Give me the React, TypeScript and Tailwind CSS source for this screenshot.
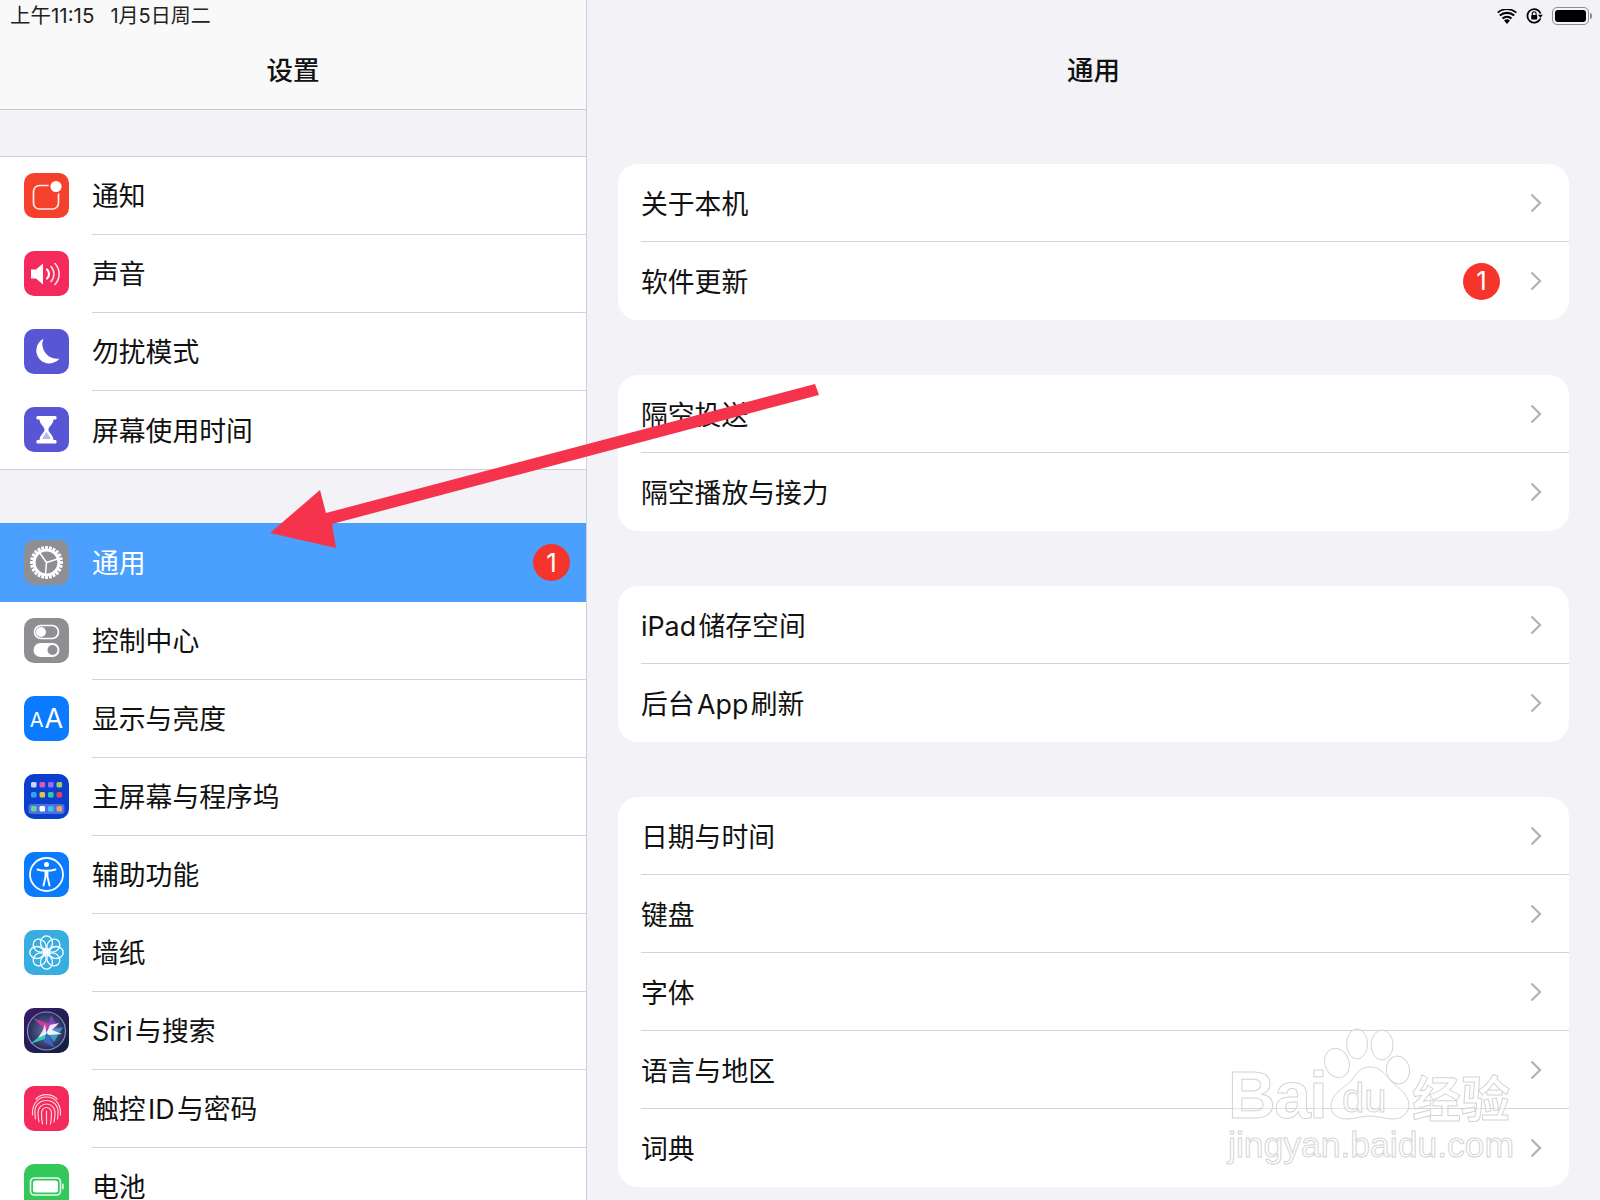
import React from "react";

const W = "w-[45px] h-[45px] rounded-[10px] shrink-0 overflow-hidden flex items-center justify-center -mt-[1px]";

function Svg({ children }: { children: React.ReactNode }) {
  return (
    <svg viewBox="0 0 45 45" className="w-[45px] h-[45px] block">
      {children}
    </svg>
  );
}

const range = (n: number) => Array.from({ length: n }, (_, i) => i);

const icons: Record<string, React.ReactNode> = {
  notify: (
    <div className={`${W} bg-[#f5402c]`}>
      <Svg>
        <rect x="9.5" y="12.5" width="25" height="23.5" rx="6" fill="none" stroke="#fff" strokeOpacity="0.9" strokeWidth="1.7" />
        <circle cx="32" cy="13.5" r="7.4" fill="#f5402c" />
        <circle cx="32" cy="13.5" r="5.6" fill="#fff" />
      </Svg>
    </div>
  ),
  sound: (
    <div className={`${W} bg-[#f52a5c]`}>
      <Svg>
        <path d="M7 18.5h5l7-6v21l-7-6H7z" fill="#fff" />
        <path d="M23 18.5a6 6 0 0 1 0 9" fill="none" stroke="#fff" strokeWidth="2.2" strokeLinecap="round" />
        <path d="M27 15.5a11 11 0 0 1 0 15" fill="none" stroke="#fff" strokeOpacity="0.85" strokeWidth="1.6" strokeLinecap="round" />
        <path d="M31 12.5a15.5 15.5 0 0 1 0 21" fill="none" stroke="#fff" strokeOpacity="0.85" strokeWidth="1.6" strokeLinecap="round" />
      </Svg>
    </div>
  ),
  moon: (
    <div className={`${W} bg-[#5956d6]`}>
      <Svg>
        <path d="M19.500 9.800A13 13 0 1 0 35.500 29.500 14.500 14.500 0 0 1 19.500 9.800z" fill="#fff" />
      </Svg>
    </div>
  ),
  hourglass: (
    <div className={`${W} bg-[#5956d6]`}>
      <Svg>
        <rect x="12.500" y="9" width="20" height="3.400" rx="1.200" fill="#fff" />
        <rect x="12.500" y="33" width="20" height="3.400" rx="1.200" fill="#fff" />
        <path d="M15.500 12h14c0 5.500-5 7.500-5 10.700s5 5.200 5 10.500h-14c0-5.300 5-7.300 5-10.500S15.500 17.500 15.500 12z" fill="#fff" />
        <path d="M22.500 24.500c-.6 2.500-3.300 4-4.200 7.500h8.400c-.9-3.500-3.600-5-4.200-7.500z" fill="#b9b7ee" />
      </Svg>
    </div>
  ),
  gear: (
    <div className={`${W} bg-[#8e8e93]`}>
      <Svg>
        {range(24).map((i) => (
          <rect key={i} x="21.100" y="6" width="2.800" height="5" fill="#fff" transform={`rotate(${i * 15} 22.500 22.500)`} />
        ))}
        <circle cx="22.500" cy="22.500" r="12.300" fill="none" stroke="#fff" strokeWidth="2.800" />
        <path d="M22.500 22.500L15.500 12.500M22.500 22.500L33.500 19M22.500 22.500L21.500 34" stroke="#fff" strokeWidth="1.500" />
      </Svg>
    </div>
  ),
  control: (
    <div className={`${W} bg-[#8e8e93]`}>
      <Svg>
        <rect x="10.500" y="7.500" width="24" height="13" rx="6.500" fill="none" stroke="#fff" strokeWidth="1.700" />
        <circle cx="17" cy="14" r="5" fill="#fff" />
        <rect x="9.500" y="25" width="26" height="14" rx="7" fill="#fff" />
        <circle cx="28.500" cy="32" r="5" fill="#8e8e93" />
      </Svg>
    </div>
  ),
  display: (
    <div className={`${W} bg-[#0a7aff] text-white font-['Inter','Noto_Sans_CJK_SC',sans-serif] font-normal`}>
      <span className="text-[20px] leading-none pt-[3px]">A</span>
      <span className="text-[27px] leading-none ml-[1px]">A</span>
    </div>
  ),
  home: (
    <div className={`${W} bg-[#0d3fce]`}>
      <Svg>
        {[
          ["#c9d4ff", 7],
          ["#dd5ab0", 15.500],
          ["#9a6cf5", 24],
          ["#9ccf63", 32.500],
        ].map(([c, x]) => (
          <rect key={String(x)} x={Number(x)} y="8" width="5.600" height="5.600" rx="1.500" fill={String(c)} />
        ))}
        {[
          ["#2aa7ef", 7],
          ["#e4c13d", 15.500],
          ["#2fc9b0", 24],
          ["#e5405c", 32.500],
        ].map(([c, x]) => (
          <rect key={String(x)} x={Number(x)} y="18" width="5.600" height="5.600" rx="1.500" fill={String(c)} />
        ))}
        <rect x="4.500" y="30" width="36" height="10" rx="3" fill="#6d8be8" fillOpacity="0.65" />
        {[
          ["#68d58a", 7],
          ["#ffffff", 15.500],
          ["#3fc0f5", 24],
          ["#f0a35c", 32.500],
        ].map(([c, x]) => (
          <rect key={String(x)} x={Number(x)} y="32" width="5.600" height="5.600" rx="1.500" fill={String(c)} />
        ))}
      </Svg>
    </div>
  ),
  access: (
    <div className={`${W} bg-[#0a7aff]`}>
      <Svg>
        <circle cx="22.500" cy="22.500" r="16.500" fill="none" stroke="#fff" strokeWidth="1.800" />
        <circle cx="22.500" cy="12.500" r="2.500" fill="#fff" />
        <path d="M13.500 17.500c3 1 5.500 1.300 9 1.300s6-.3 9-1.300" fill="none" stroke="#fff" strokeWidth="2" strokeLinecap="round" />
        <path d="M21.500 19v6l-2 8.500M23.500 19v6l2 8.500" fill="none" stroke="#fff" strokeWidth="1.900" strokeLinecap="round" />
      </Svg>
    </div>
  ),
  wallpaper: (
    <div className={`${W} bg-[#38aee0]`}>
      <Svg>
        {range(8).map((i) => (
          <ellipse key={i} cx="22.500" cy="12.800" rx="6" ry="7" fill="none" stroke="#fff" strokeWidth="1.300" transform={`rotate(${i * 45} 22.500 22.500)`} />
        ))}
        <circle cx="22.500" cy="22.500" r="2.400" fill="#fff" />
      </Svg>
    </div>
  ),
  siri: (
    <div className={`${W}`}>
      <Svg>
        <defs>
          <linearGradient id="sb" x1="0" y1="0" x2="1" y2="1">
            <stop offset="0" stopColor="#3b1a6b" />
            <stop offset="1" stopColor="#10203f" />
          </linearGradient>
          <radialGradient id="sc" cx="0.500" cy="0.500" r="0.500">
            <stop offset="0" stopColor="#6a6fa8" />
            <stop offset="1" stopColor="#262c58" />
          </radialGradient>
          <filter id="sf">
            <feGaussianBlur stdDeviation="0.500" />
          </filter>
        </defs>
        <rect width="45" height="45" fill="url(#sb)" />
        <circle cx="22.500" cy="23" r="19" fill="url(#sc)" stroke="#8391bb" strokeWidth="1.200" />
        <g filter="url(#sf)">
          <polygon points="22.500,23 9,10 29,17" fill="#d83aa0" fillOpacity="0.85" />
          <polygon points="22.500,23 27,7 35,22" fill="#9c3fd0" fillOpacity="0.75" />
          <polygon points="22.500,23 39,19 30,34" fill="#38b4d8" fillOpacity="0.75" />
          <polygon points="22.500,23 6,36 21,31" fill="#35d8c0" fillOpacity="0.9" />
          <polygon points="22.500,23 31,40 20,34" fill="#3a6cd8" fillOpacity="0.75" />
          <polygon points="22.500,25 26,17 35,15 28,22 38,26 25,27" fill="#ffffff" fillOpacity="0.9" />
          <polygon points="22.500,26 14,30 19,22 21,16" fill="#ffffff" fillOpacity="0.85" />
        </g>
      </Svg>
    </div>
  ),
  touch: (
    <div className={`${W} bg-[#f52a5c]`}>
      <Svg>
        <g fill="none" stroke="#fff" strokeOpacity="0.8" strokeWidth="1.200" strokeLinecap="round">
          <path d="M12 13a15 15 0 0 1 21 0" />
          <path d="M8.500 29c-.8-10 5-18 14-18s14.800 8 14 18" />
          <path d="M11.500 33c-.5-3-.6-5-.6-7 0-7 5-11.500 11.600-11.500s11.600 4.500 11.600 11.500c0 2-.1 4-.6 7" />
          <path d="M15 36c-.6-3-1-6-1-9.500 0-5 3.800-8.500 8.500-8.500s8.500 3.500 8.500 8.500c0 3.500-.4 6.500-1 9.500" />
          <path d="M18.500 38c-.6-3-1-7-1-11 0-3 2.200-5.500 5-5.500s5 2.500 5 5.500c0 4-.4 8-1 11" />
          <path d="M22.500 25v13" />
        </g>
      </Svg>
    </div>
  ),
  battery: (
    <div className={`${W} bg-[#34c759]`}>
      <Svg>
        <rect x="6.500" y="14" width="30" height="17" rx="4" fill="none" stroke="#fff" strokeOpacity="0.9" strokeWidth="1.600" />
        <rect x="9" y="16.500" width="25" height="12" rx="2.500" fill="#fff" />
        <rect x="38" y="19.500" width="1.800" height="6" rx="0.900" fill="#fff" fillOpacity="0.8" />
      </Svg>
    </div>
  ),
};

function Badge() {
  return (
    <div className="w-[37px] h-[37px] rounded-full bg-[#f5352b] text-white text-[26px] leading-none flex items-center justify-center font-['Inter',sans-serif]">
      1
    </div>
  );
}

function SideRow({ icon, label, last, selected, badge }: { icon: string; label: string; last?: boolean; selected?: boolean; badge?: boolean }) {
  return (
    <div className={selected ? "h-[79px] bg-[#4b9ffe] flex items-center pl-[24px] pr-[16px]" : "h-[78px] bg-white flex items-center pl-[24px]"}>
      {icons[icon]}
      <div className={`flex-1 self-stretch ml-[23px] flex items-center justify-between ${!selected && !last ? "border-b border-[#d3d3d8]" : ""}`}>
        <span className={`pt-[2px] ${selected ? "text-white" : "text-[#111]"}`}>{label}</span>
        {badge && <Badge />}
      </div>
    </div>
  );
}

function Chevron() {
  return (
    <svg viewBox="0 0 12 20" className="w-[12px] h-[20px] shrink-0">
      <path d="M1.500 1.500L10 10l-8.500 8.500" fill="none" stroke="#b3b3b8" strokeWidth="2.300" />
    </svg>
  );
}

function CardRow({ label, last, badge }: { label: string; last?: boolean; badge?: boolean }) {
  return (
    <div className={`h-[78px] flex items-center pr-[27px] ${last ? "" : "border-b border-[#d3d3d8]"}`}>
      <span className="flex-1 text-[#111] pt-[3px]">{label}</span>
      {badge && (
        <div className="mr-[30px]">
          <Badge />
        </div>
      )}
      <Chevron />
    </div>
  );
}

function Card({ children }: { children: React.ReactNode }) {
  return <div className="bg-white rounded-[20px] pl-[23px]">{children}</div>;
}

export default function App() {
  return (
    <div className="relative w-[1600px] h-[1200px] overflow-hidden flex bg-[#f2f2f7] text-[26.8px] leading-none font-['Inter','Noto_Sans_CJK_SC',sans-serif]">
      <aside className="w-[587px] shrink-0 h-full border-r border-[#cfcfd6] overflow-hidden">
        <header className="h-[110px] bg-[#f9f9f9] border-b border-[#c6c6cc]">
          <div className="h-[32px] flex items-center pl-[10px] text-[20.5px] text-[#222]">
            <span>上午11:15</span>
            <span className="ml-[16px] text-[20px]">1月5日周二</span>
          </div>
          <div className="h-[76px] flex items-center justify-center text-[26.5px] font-medium text-[#111]">设置</div>
        </header>
        <div className="h-[46px]" />
        <section className="border-t border-b border-[#cfcfd6]">
          <SideRow icon="notify" label="通知" />
          <SideRow icon="sound" label="声音" />
          <SideRow icon="moon" label="勿扰模式" />
          <SideRow icon="hourglass" label="屏幕使用时间" last />
        </section>
        <div className="h-[53px]" />
        <section>
          <SideRow icon="gear" label="通用" selected badge />
          <SideRow icon="control" label="控制中心" />
          <SideRow icon="display" label="显示与亮度" />
          <SideRow icon="home" label="主屏幕与程序坞" />
          <SideRow icon="access" label="辅助功能" />
          <SideRow icon="wallpaper" label="墙纸" />
          <SideRow icon="siri" label={"Siri\u200a与搜索"} />
          <SideRow icon="touch" label={"触控\u200aID\u200a与密码"} />
          <SideRow icon="battery" label="电池" />
        </section>
      </aside>

      <main className="flex-1 min-w-0 h-full">
        <header className="h-[110px]">
          <div className="h-[32px] flex items-center justify-end pr-[8px]">
            <svg viewBox="0 0 20 15" className="w-[20px] h-[15px]">
              <path d="M10 15l-3-3.600a4.800 4.800 0 0 1 6 0z" fill="#000" />
              <path d="M5.500 9.500a7 7 0 0 1 9 0" fill="none" stroke="#000" strokeWidth="2.200" />
              <path d="M2.800 6.500a11 11 0 0 1 14.400 0" fill="none" stroke="#000" strokeWidth="2.200" />
              <path d="M.700 3.600a14.500 14.500 0 0 1 18.600 0" fill="none" stroke="#000" strokeWidth="1.800" />
            </svg>
            <svg viewBox="0 0 17 16" className="w-[17px] h-[16px] ml-[9px]">
              <path d="M14.500 10.500A6.800 6.800 0 1 1 14.600 5.500" fill="none" stroke="#000" strokeWidth="1.800" />
              <path d="M12 6.800h4.800L14.500 10z" fill="#000" />
              <rect x="5.200" y="7" width="6" height="4.600" rx="0.800" fill="#000" />
              <path d="M6.300 7V5.600a1.900 1.900 0 0 1 3.800 0V7" fill="none" stroke="#000" strokeWidth="1.100" />
            </svg>
            <div className="ml-[9px] flex items-center">
              <div className="w-[37px] h-[18px] rounded-[5px] border border-[#8e8e93] p-[2px]">
                <div className="w-full h-full rounded-[3px] bg-black" />
              </div>
              <div className="w-[2px] h-[6px] rounded-r-[2px] bg-[#8e8e93] ml-[1px]" />
            </div>
          </div>
          <div className="h-[76px] flex items-center justify-center text-[26.5px] font-medium text-[#111]">通用</div>
        </header>
        <div className="pt-[54px] pl-[31px] pr-[31px] flex flex-col gap-[55px]">
          <Card>
            <CardRow label="关于本机" />
            <CardRow label="软件更新" badge last />
          </Card>
          <Card>
            <CardRow label="隔空投送" />
            <CardRow label="隔空播放与接力" last />
          </Card>
          <Card>
            <CardRow label={"iPad\u200a储存空间"} />
            <CardRow label={"后台\u200aApp\u200a刷新"} last />
          </Card>
          <Card>
            <CardRow label="日期与时间" />
            <CardRow label="键盘" />
            <CardRow label="字体" />
            <CardRow label="语言与地区" />
            <CardRow label="词典" last />
          </Card>
        </div>
      </main>

      {/* Red annotation arrow lying over the page */}
      <svg viewBox="0 0 1600 1200" className="absolute left-0 top-0 w-[1600px] h-[1200px] pointer-events-none">
        <polygon points="270,533 320,490 326,513 815,384 819,395 332,524 336,548" fill="#f5334c" />
      </svg>

      {/* Baidu watermark lying over the page */}
      <svg viewBox="0 0 310 160" className="absolute left-[1220px] top-[1020px] w-[310px] h-[160px] pointer-events-none">
        <g fill="#ffffff" fillOpacity="0.45" stroke="#d4d4d6" strokeWidth="1">
          <ellipse cx="137" cy="24" rx="10.500" ry="15" />
          <ellipse cx="162" cy="25" rx="11" ry="15" />
          <ellipse cx="117" cy="43" rx="12" ry="15" transform="rotate(-20 117 43)" />
          <ellipse cx="178" cy="50" rx="11.500" ry="14" transform="rotate(-10 178 50)" />
          <path d="M150 47c-10 0-14 7-20 15-6 6-19 12-19 24 0 9 8 13 16 13 8 0 14-3 23-3s15 3 23 3c8 0 16-5 16-14 0-11-12-18-18-24-6-7-11-14-21-14z" />
          <text x="8" y="98" fontFamily="'Liberation Sans',sans-serif" fontWeight="700" fontSize="66" letterSpacing="-1.500">Bai</text>
          <text x="122" y="92" fontFamily="'Liberation Sans',sans-serif" fontSize="40">du</text>
          <text x="192" y="97" fontFamily="'Noto Sans CJK SC',sans-serif" fontWeight="700" fontSize="49">经验</text>
          <text x="8" y="137" fontFamily="'Liberation Sans',sans-serif" fontSize="35.500">jingyan.baidu.com</text>
        </g>
      </svg>
    </div>
  );
}
